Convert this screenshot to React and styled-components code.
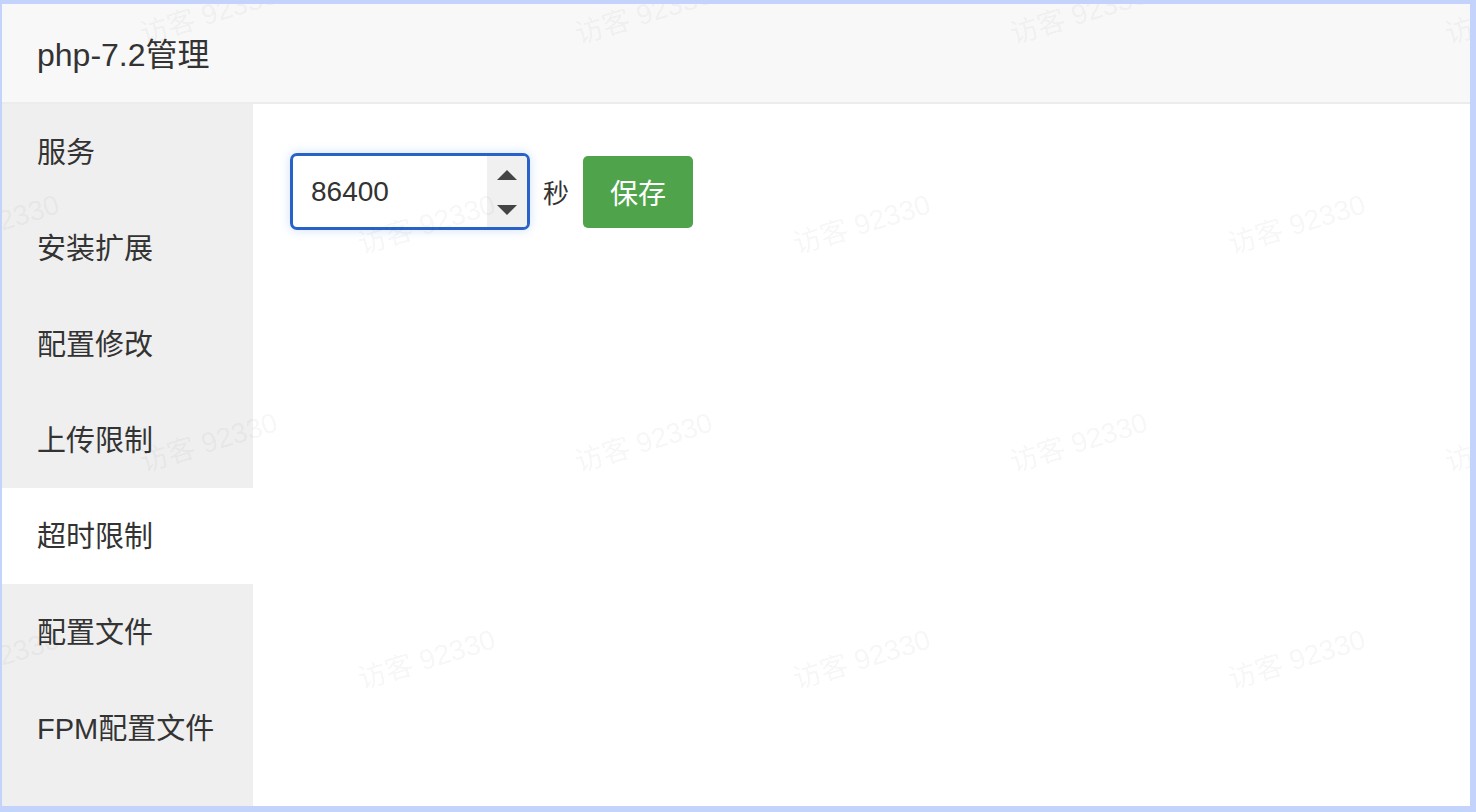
import styled, { createGlobalStyle } from "styled-components";

const GlobalStyle = createGlobalStyle`
  html, body {
    margin: 0;
    padding: 0;
    background: #ffffff;
  }
  body {
    font-family: "Liberation Sans", "Noto Sans CJK SC", sans-serif;
    color: #333;
  }
`;

const Frame = styled.div`
  position: relative;
  width: 1476px;
  height: 812px;
  box-sizing: border-box;
  border-style: solid;
  border-color: #c3d3fb;
  border-width: 4px 6px 6px 2px;
  display: flex;
  flex-direction: column;
  overflow: hidden;
  background: #fff;
`;

const Header = styled.div`
  height: 100px;
  flex: none;
  background: #f8f8f8;
  border-bottom: 2px solid #ececec;
  display: flex;
  align-items: center;
  padding-left: 35px;
  padding-bottom: 2px;
  box-sizing: border-box;
  font-size: 32px;
  color: #333;
`;

const Body = styled.div`
  flex: 1;
  display: flex;
  min-height: 0;
`;

const Sidebar = styled.ul`
  width: 251px;
  flex: none;
  margin: 0;
  padding: 0;
  list-style: none;
  background: #efefef;
`;

const NavItem = styled.li`
  height: 96px;
  line-height: 98px;
  padding-left: 35px;
  font-size: 29px;
  color: #333;
  background: ${(p) => (p.$active ? "#fff" : "transparent")};
`;

const Content = styled.div`
  flex: 1;
  padding: 49px 37px;
`;

const FormRow = styled.div`
  display: flex;
  align-items: center;
`;

const NumberBox = styled.div`
  width: 240px;
  height: 77px;
  box-sizing: border-box;
  border: 3px solid #2862c8;
  border-radius: 7px;
  box-shadow: 0 0 8px 2px rgba(80, 140, 240, 0.18);
  display: flex;
  overflow: hidden;
  background: #fff;
`;

const NumberInput = styled.input`
  flex: 1;
  min-width: 0;
  border: none;
  outline: none;
  padding: 0 0 0 18px;
  font-family: "Liberation Sans", sans-serif;
  font-size: 28px;
  color: #333;
  background: transparent;
`;

const Spinner = styled.div`
  width: 40px;
  background: #f0f0f0;
  display: flex;
  flex-direction: column;
  align-items: center;
  justify-content: space-between;
  padding: 14px 0 12px;
  box-sizing: border-box;
`;

const Arrow = styled.span`
  width: 0;
  height: 0;
  border-left: 10px solid transparent;
  border-right: 10px solid transparent;
  ${(p) =>
    p.$down
      ? "border-top: 10px solid #444;"
      : "border-bottom: 10px solid #444;"}
`;

const Unit = styled.span`
  font-size: 26px;
  margin: 0 14px 0 13px;
  color: #333;
`;

const SaveButton = styled.button`
  width: 110px;
  height: 72px;
  border: none;
  border-radius: 5px;
  background: #4fa44b;
  color: #fff;
  font-family: "Liberation Sans", "Noto Sans CJK SC", sans-serif;
  font-size: 28px;
  padding: 0;
  cursor: pointer;
`;

const Watermarks = styled.div`
  position: absolute;
  inset: 0;
  pointer-events: none;
`;

const Mark = styled.span`
  position: absolute;
  font-size: 28px;
  white-space: nowrap;
  color: rgba(0, 0, 0, 0.055);
  transform: translate(-50%, -50%) rotate(-17deg);
`;

const navItems = [
  "服务",
  "安装扩展",
  "配置修改",
  "上传限制",
  "超时限制",
  "配置文件",
  "FPM配置文件",
];

// staggered watermark grid, alternate rows shifted by half a column
const marks = [];
[12, 222, 440, 657].forEach((y, row) => {
  const xs = row % 2 === 0 ? [208, 643, 1078, 1513] : [-10, 426, 861, 1296];
  xs.forEach((x) => marks.push({ x, y }));
});

export default function App() {
  return (
    <>
      <GlobalStyle />
      <Frame>
        <Header>php-7.2管理</Header>
        <Body>
          <Sidebar>
            {navItems.map((item) => (
              <NavItem key={item} $active={item === "超时限制"}>
                {item}
              </NavItem>
            ))}
          </Sidebar>
          <Content>
            <FormRow>
              <NumberBox>
                <NumberInput defaultValue="86400" />
                <Spinner>
                  <Arrow />
                  <Arrow $down />
                </Spinner>
              </NumberBox>
              <Unit>秒</Unit>
              <SaveButton>保存</SaveButton>
            </FormRow>
          </Content>
        </Body>
        <Watermarks>
          {marks.map((m, i) => (
            <Mark key={i} style={{ left: m.x - 2, top: m.y - 4 }}>
              访客 92330
            </Mark>
          ))}
        </Watermarks>
      </Frame>
    </>
  );
}
